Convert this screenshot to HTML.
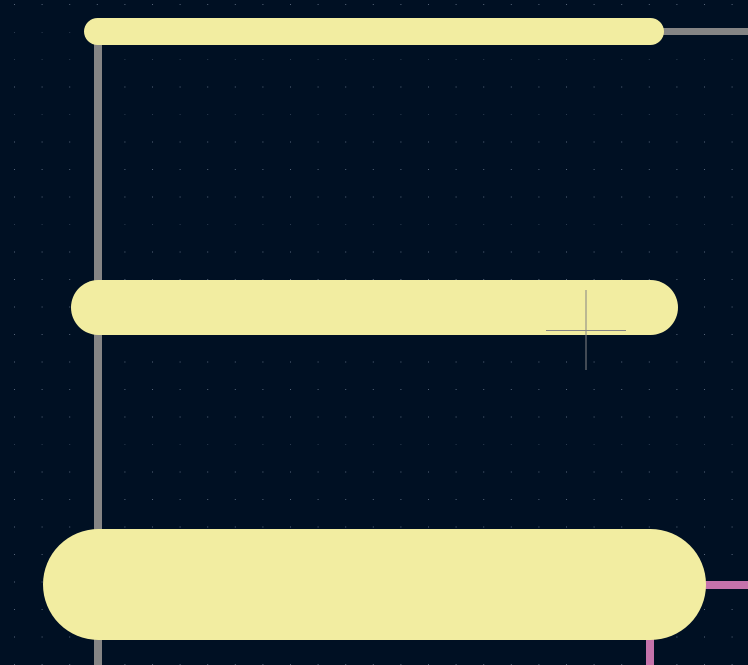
<!DOCTYPE html>
<html><head><style>
html,body{margin:0;padding:0;background:#001023;width:748px;height:665px;overflow:hidden}
</style></head><body>
<svg width="748" height="665" xmlns="http://www.w3.org/2000/svg" style="display:block">
<defs>
<pattern id="g" x="14" y="4" width="27.6" height="27.5" patternUnits="userSpaceOnUse">
<rect x="0" y="0" width="1" height="1" fill="#56657a"/>
</pattern>
</defs>
<rect width="748" height="665" fill="#001023"/>
<rect width="748" height="665" fill="url(#g)"/>
<rect x="94" y="40" width="8" height="625" fill="#858585"/>
<rect x="660" y="28" width="88" height="7" fill="#858585"/>
<rect x="700" y="581" width="48" height="8" fill="#c573ab"/>
<rect x="646" y="630" width="8" height="35" fill="#c573ab"/>
<rect x="84" y="18" width="580" height="27" rx="13.5" fill="#f2eda1"/>
<rect x="71" y="280" width="607" height="55" rx="27.5" fill="#f2eda1"/>
<rect x="43" y="529" width="663" height="111" rx="55.5" fill="#f2eda1"/>
<line x1="586" y1="290" x2="586" y2="370" stroke="#848484" stroke-width="1"/>
<line x1="546" y1="330.5" x2="626" y2="330.5" stroke="#848484" stroke-width="1"/>
</svg>
</body></html>
